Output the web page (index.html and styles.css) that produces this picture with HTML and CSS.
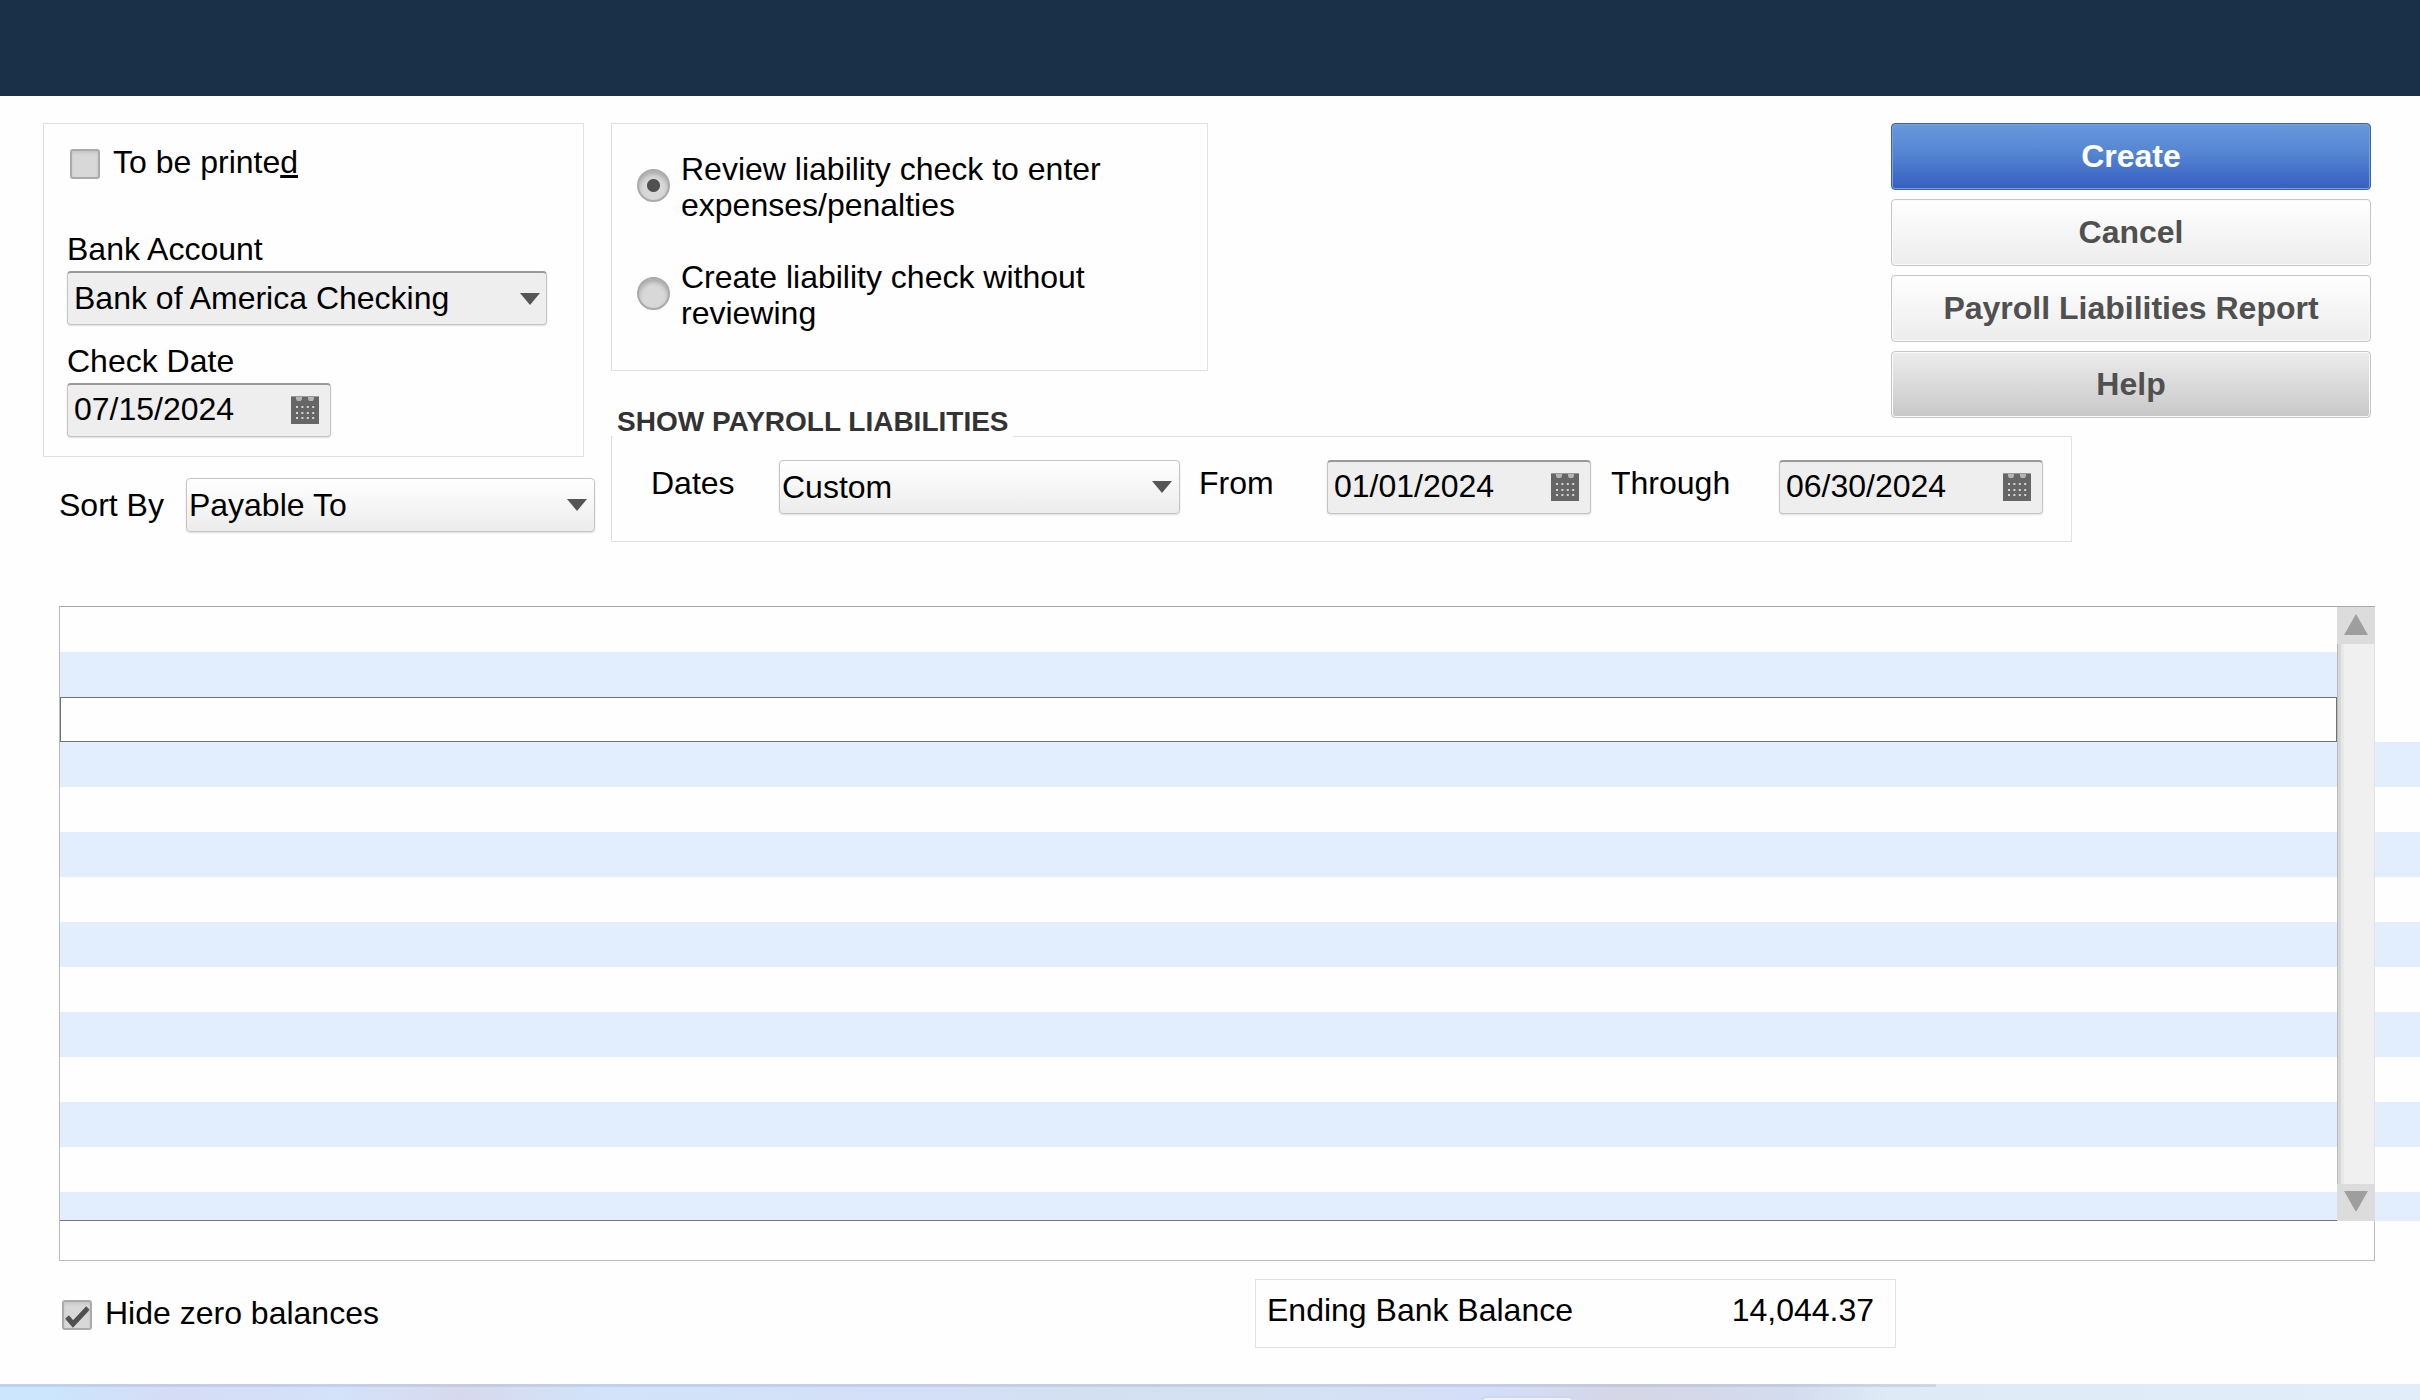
FILE: index.html
```html
<!DOCTYPE html>
<html lang="en">

<head>
    <meta charset="UTF-8">
    <title>Pay Liabilities</title>
    <link rel="stylesheet" href="styles.css">
</head>

<body>
    <!-- calendar icon used by the date fields -->
    <svg class="sprite" aria-hidden="true">
        <symbol id="calendar" viewBox="0 0 28 28">
            <path fill="#666" d="M0 0h28v28H0z"/>
            <path fill="#999" d="M0 0h28v1H0z"/>
            <path fill="#b4b4b4" d="M5 1h6v2l-1 2H6L5 3zM17 1h6v2l-1 2h-4l-1-2z"/>
            <path fill="none" stroke="#d4d4d4" stroke-width="2" stroke-dasharray="2 3.4" d="M5 11h19M5 17h19M5 22h19"/>
        </symbol>
    </svg>

    <header class="titlebar"></header>

    <main>
        <form class="top" action="javascript:void(0);">
            <div class="left">
                <div class="box account">
                    <div class="check">
                        <input type="checkbox" id="printed">
                        <label for="printed">To be printe<u>d</u></label>
                    </div>
                    <label for="bank">Bank Account</label>
                    <select id="bank" class="field sunken">
                        <option>Bank of America Checking</option>
                    </select>
                    <label for="check-date">Check Date</label>
                    <div class="field date">
                        <input type="text" id="check-date" value="07/15/2024">
                        <button type="button" class="cal" aria-label="Pick check date"><svg><use href="#calendar"/></svg></button>
                    </div>
                </div>
                <div class="sort">
                    <label for="sort">Sort By</label>
                    <select id="sort" class="field">
                        <option>Payable To</option>
                    </select>
                </div>
            </div>

            <div class="middle">
                <div class="box review">
                    <div class="radio">
                        <input type="radio" name="review" id="review-yes" checked>
                        <label for="review-yes">Review liability check to enter expenses/penalties</label>
                    </div>
                    <div class="radio">
                        <input type="radio" name="review" id="review-no">
                        <label for="review-no">Create liability check without reviewing</label>
                    </div>
                </div>
                <h2>SHOW PAYROLL LIABILITIES</h2>
                <div class="box dates">
                    <label for="dates">Dates</label>
                    <select id="dates" class="field">
                        <option>Custom</option>
                    </select>
                    <label for="from">From</label>
                    <div class="field date">
                        <input type="text" id="from" value="01/01/2024">
                        <button type="button" class="cal" aria-label="Pick from date"><svg><use href="#calendar"/></svg></button>
                    </div>
                    <label for="through">Through</label>
                    <div class="field date">
                        <input type="text" id="through" value="06/30/2024">
                        <button type="button" class="cal" aria-label="Pick through date"><svg><use href="#calendar"/></svg></button>
                    </div>
                </div>
            </div>

            <div class="actions">
                <button type="submit" class="btn primary">Create</button>
                <button type="button" class="btn">Cancel</button>
                <button type="button" class="btn">Payroll Liabilities Report</button>
                <button type="button" class="btn pressed">Help</button>
            </div>
        </form>

        <div class="list">
            <div class="grid">
                <div class="rows">
                    <table>
                        <tbody>
                            <tr><td></td></tr>
                            <tr><td></td></tr>
                            <tr class="selected"><td></td></tr>
                            <tr><td></td></tr>
                            <tr><td></td></tr>
                            <tr><td></td></tr>
                            <tr><td></td></tr>
                            <tr><td></td></tr>
                            <tr><td></td></tr>
                            <tr><td></td></tr>
                            <tr><td></td></tr>
                            <tr><td></td></tr>
                            <tr><td></td></tr>
                            <tr class="cut"><td></td></tr>
                        </tbody>
                    </table>
                    <div class="scroll">
                        <button type="button" aria-label="Scroll up"><svg viewBox="0 0 24 21"><path d="M12 0l12 21H0z"/></svg></button>
                        <div class="track"></div>
                        <button type="button" aria-label="Scroll down"><svg viewBox="0 0 24 21"><path d="M0 0h24L12 21z"/></svg></button>
                    </div>
                </div>
                <div class="totals"></div>
            </div>
            <div class="edge"></div>
        </div>

        <div class="bottom">
            <div class="check">
                <input type="checkbox" id="hide-zero" checked>
                <label for="hide-zero">Hide zero balances</label>
            </div>
            <div class="box balance">
                <span>Ending Bank Balance</span>
                <span>14,044.37</span>
            </div>
        </div>
    </main>

    <footer class="taskbar"><div class="line"></div><div class="tab"></div></footer>
</body>

</html>
```

FILE: styles.css
```css
* {
    box-sizing: border-box;
}

body {
    margin: 0;
    min-height: 100vh;
    display: flex;
    flex-direction: column;
    overflow-x: hidden;
    background: #fefefe;
    color: #000;
    font: 32px/36px "Liberation Sans", Arial, sans-serif;
}

input,
select,
button {
    font: inherit;
    color: inherit;
    margin: 0;
}

.sprite {
    display: none;
}

.titlebar {
    height: 96px;
    background: #1a3049;
}

main {
    flex: 1;
    padding-top: 27px;
}

.box {
    border: 1px solid #e0e0e0;
}

/* top part */
.top {
    display: flex;
    align-items: flex-start;
    padding: 0 49px 0 43px;
}

.left {
    flex: none;
    width: 568px;
}

.account {
    width: 541px;
    height: 334px;
    padding: 22px 23px 0;
    display: flex;
    flex-direction: column;
}

.account > label {
    margin-bottom: 4px;
}

.account .field {
    margin-bottom: 18px;
}

.account .check {
    padding-left: 3px;
    margin-bottom: 49px;
}

.check {
    display: flex;
    align-items: center;
    gap: 13px;
}

.check label {
    padding-bottom: 2px;
    margin-top: -2px;
}

input[type='checkbox'],
input[type='radio'] {
    appearance: none;
    flex: none;
    width: 30px;
    height: 30px;
    border: 2px solid #aaa;
    border-radius: 3px;
    background: #d8d8d8 center / contain no-repeat;
    box-shadow: inset 0 2px 3px #c4c4c4;
}

input[type='checkbox']:checked {
    background-image: url("data:image/svg+xml,%3Csvg xmlns='http://www.w3.org/2000/svg' viewBox='0 0 26 26'%3E%3Cpath d='M3 15l6 7L24 6' fill='none' stroke='%23505050' stroke-width='5'/%3E%3C/svg%3E");
}

input[type='radio'] {
    width: 33px;
    height: 33px;
    margin-bottom: 4px;
    border-radius: 50%;
    box-shadow: inset 0 3px 4px #a8a8a8;
}

input[type='radio']:checked {
    background-image: radial-gradient(circle, #505050 6px, transparent 7px);
}

.field {
    height: 54px;
    border: 1px solid #c4c4c4;
    border-radius: 4px;
    box-shadow: 0 1px 2px #ddd;
}

select.field {
    appearance: none;
    padding: 0 40px 1px 2px;
    background: url("data:image/svg+xml,%3Csvg xmlns='http://www.w3.org/2000/svg' width='20' height='12'%3E%3Cpath d='M0 0h20L10 12z' fill='%23555'/%3E%3C/svg%3E") right 7px center no-repeat, linear-gradient(#fff, #ececec);
}

select.sunken {
    width: 480px;
    padding: 0 40px 2px 6px;
    background-image: url("data:image/svg+xml,%3Csvg xmlns='http://www.w3.org/2000/svg' width='20' height='12'%3E%3Cpath d='M0 0h20L10 12z' fill='%23555'/%3E%3C/svg%3E"), linear-gradient(#eee, #eee);
    background-position: right 6px center;
}

.sunken,
.date {
    border-top: 2px solid #999;
}

.date {
    display: flex;
    align-items: center;
    width: 264px;
    padding: 0 11px 1px 6px;
    background: #eee;
}

.date input {
    flex: 1;
    min-width: 0;
    padding: 0 0 2px;
    border: 0;
    background: none;
}

.cal {
    padding: 0;
    border: 0;
    background: none;
}

.cal,
.cal svg {
    display: block;
    width: 28px;
    height: 28px;
}

.sort {
    display: flex;
    align-items: center;
    gap: 22px;
    padding: 21px 0 0 16px;
}

.sort .field {
    width: 409px;
}

.middle {
    flex: none;
    width: 1461px;
    margin-right: -181px;
}

.review {
    width: 597px;
    height: 248px;
    padding: 27px 25px 0;
}

.radio {
    display: flex;
    align-items: center;
    gap: 11px;
    margin-bottom: 36px;
}

.radio label {
    width: 450px;
}

/* the heading cuts the top border of the dates box */
h2 {
    position: relative;
    width: 400px;
    margin: 33px 0 -4px 2px;
    padding-left: 4px;
    background: #fefefe;
    color: #333;
    font-size: 28px;
    line-height: 36px;
}

.dates {
    display: flex;
    height: 106px;
    padding: 23px 28px 0 39px;
}

.dates label {
    flex: none;
    padding-top: 5px;
}

.dates label:nth-of-type(1) {
    width: 128px;
}

.dates select {
    width: 401px;
    margin-right: 19px;
}

.dates label:nth-of-type(2) {
    width: 128px;
}

.dates label:nth-of-type(3) {
    width: 188px;
    padding-left: 20px;
}

.dates .date {
    flex: none;
}

.actions {
    flex: none;
    width: 480px;
    margin-left: auto;
    display: flex;
    flex-direction: column;
    gap: 9px;
}

.btn {
    height: 67px;
    padding: 0 0 2px;
    border: 1px solid #c6c6c6;
    border-radius: 4px;
    background: linear-gradient(#fff, #ececec);
    box-shadow: inset 0 0 0 1px #fafafa;
    color: #505050;
    font-weight: bold;
}

.btn.primary {
    border-color: #3a62a8;
    background: linear-gradient(#6799dc, #5585d2 45%, #365dc0);
    box-shadow: inset 0 0 0 1px #7ba0e0;
    color: #fff;
}

.btn.pressed {
    background: linear-gradient(#ececec, #c8c8c8);
}

/* striped list */
.list {
    display: flex;
    margin-top: 64px;
    padding-left: 59px;
}

.grid {
    flex: 1;
    border: 1px solid #bbb;
    border-top-color: #a8a8a8;
}

.rows {
    display: flex;
    margin-right: -1px;
}

table {
    flex: 1;
    border-collapse: collapse;
    border-bottom: 1px solid #777;
}

td {
    height: 45px;
    padding: 0;
}

tr:nth-child(even) td {
    background: #e2eefd;
}

.selected td {
    outline: 1px solid #6c7276;
    outline-offset: -1px;
}

.cut td {
    height: 28px;
}

.scroll {
    width: 38px;
    display: flex;
    flex-direction: column;
}

.scroll button {
    height: 37px;
    padding: 0 0 2px;
    border: 0;
    background: #dcdcdc;
}

.scroll svg {
    display: block;
    width: 24px;
    height: 21px;
    margin: auto;
    fill: #9e9e9e;
}

.track {
    flex: 1;
    border-right: 1px solid #e2e2e2;
    background: linear-gradient(to right, #bbb 1px, #d6d6d6 1px 4px, #e8e8e8 4px 7px, #f0f0f0 7px);
}

.totals {
    height: 39px;
}

.edge {
    width: 45px;
    margin: 136px 0 40px;
    background: repeating-linear-gradient(#e2eefd 0 45px, transparent 45px 90px);
}

/* bottom part */
.bottom {
    display: grid;
    grid-template-columns: 1193px 641px;
    align-items: start;
    padding: 18px 0 0 62px;
}

.bottom .check {
    padding-top: 18px;
}

.balance {
    height: 69px;
    padding: 12px 21px 0 11px;
    display: flex;
    justify-content: space-between;
}

.taskbar {
    height: 16px;
    overflow: hidden;
    background: linear-gradient(to right, #cbe6fd 2%, #d5dcf5 7%, #d4e2fa 14%, #d6d9ee 19%, #d2e4fa 25%, #d4dff8 38%, #d2e0f0 46%, #d5e1f5 55%, #d4ddf8 62%, #d5d6e6 67%, #d3dcee 74%, #deeaf6 78%, #e1edf8);
}

.taskbar .line {
    width: 80%;
    height: 3px;
    background: rgba(160, 170, 190, 0.3);
}

.taskbar .tab {
    width: 91px;
    height: 10px;
    margin: 11px 0 0 1482px;
    border-radius: 5px;
    background: #f0f2fb;
    box-shadow: 0 0 0 2px #cdd8ee;
}
```
